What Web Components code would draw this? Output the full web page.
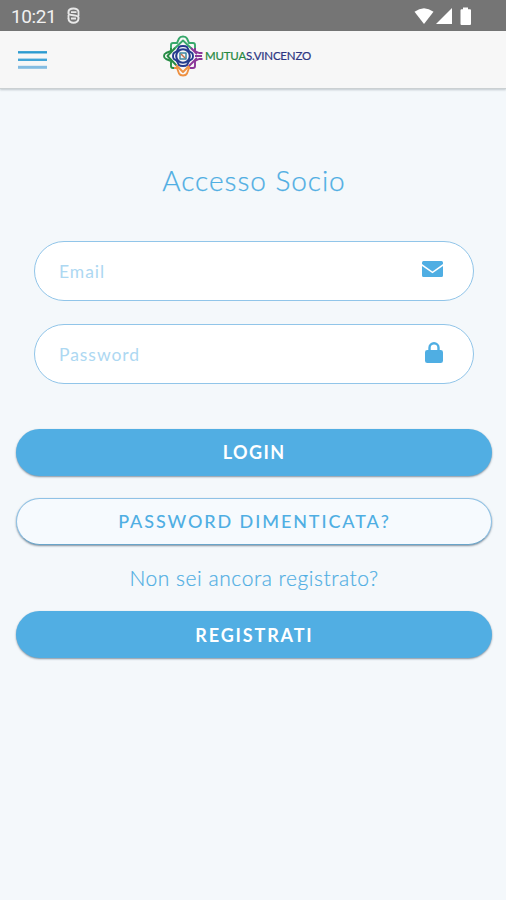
<!DOCTYPE html>
<html lang="it">
<head>
<meta charset="utf-8">
<meta name="viewport" content="width=device-width, initial-scale=1">
<title>Mutua S. Vincenzo</title>
<style>
    html, body{
        margin:0;
        height:100%;
    }
    body{
        background:#f4f8fb;
        font-family:Lato, "Open Sans", sans-serif;
        color:#4faee3;
        overflow:hidden;
    }
</style>
</head>
<body>
<login-page></login-page>

<script>
const icons={
    mail:`<svg width="21" height="16" viewBox="0 0 21 16" fill="#4faee3">
        <path d="M1.500 0H19.500Q21 0 21 1.500V3L10.500 10.500 0 3V1.500Q0 0 1.500 0Z"/>
        <path d="M0 5L10.500 12.300 21 5V14.500Q21 16 19.500 16H1.500Q0 16 0 14.500Z"/>
    </svg>`,
    lock:`<svg width="18" height="21" viewBox="0 0 18 21">
        <path d="M4.500 9V5.700A4.500 4.500 0 0 1 13.500 5.700V9" fill="none" stroke="#4faee3" stroke-width="2.400"/>
        <rect y="8" width="18" height="13" rx="2.300" fill="#4faee3"/>
    </svg>`
};

class StatusBar extends HTMLElement {
    constructor() {
        super();
        this.attachShadow({mode: 'open'});
        this.shadowRoot.innerHTML=`
            <style>
                :host{
                    display:flex;
                    align-items:center;
                    box-sizing:border-box;
                    height:31px;
                    padding:2px 34px 0 11px;
                    background:#757575;
                    color:#f1f1f1;
                    font:19px/29px Roboto, sans-serif;
                }
                .time{ width:45px; letter-spacing:-.4px; }
                .app{ margin:0 0 2px 11px; }
                .signals{ margin:0 0 1px auto; }
                svg{ display:block; }
            </style>
            <span class="time"><slot></slot></span>
            <svg class="app" width="13" height="17" viewBox="0 0 13 17" fill="none" stroke="#e8e8e8">
                <path d="M11.500 5C11.500 .2 1.500 .2 1.500 5V6.500C1.500 9 11.500 7.500 11.500 10.500V11.500C11.500 17 1.500 17 1.500 11.500" stroke-width="2"/>
                <path d="M1.500 8V12M11.500 5V9" stroke-width="1.800"/>
                <path d="M4 5.200H9.500M4 11.500H9" stroke-width="1.800"/>
            </svg>
            <svg class="signals" width="58" height="19" viewBox="0 0 58 19" fill="#fff">
                <path d="M.5 4.8Q10-2.5 19.5 4.8L10 17Z"/>
                <path d="M38 1V17H22Z"/>
                <path d="M49 .5H54V2.2H56Q57 2.2 57 3.2V16.800Q57 18 56 18H47.500Q46.500 18 46.500 17V3.200Q46.500 2.200 47.500 2.200H49Z"/>
            </svg>
        `;
    }
}

class BrandLogo extends HTMLElement {
    constructor() {
        super();
        this.attachShadow({mode: 'open'});
        this.shadowRoot.innerHTML=`
            <style>
                :host{
                    display:flex;
                    align-items:center;
                    gap:2px;
                    font-size:11.5px;
                    line-height:14px;
                    letter-spacing:-.2px;
                    color:#2c3682;
                    -webkit-text-stroke:.2px;
                    white-space:nowrap;
                }
                svg{ display:block; }
                span{ margin-top:-1px; }
                ::slotted(b){ font-weight:400; color:#25873f; }
            </style>
            <svg width="40" height="42" viewBox="0 0 40 42" fill="none" stroke-width="1.900" stroke-linejoin="round">
                <g stroke="#36a86b">
                    <path d="M8 16V10Q8 8 10 8H14L16 3.500Q17 1.500 20 1.500Q23 1.500 24 3.500L26 8H30Q32 8 32 10V15"/>
                    <path d="M11 14L20 5.500L29 14"/>
                </g>
                <g stroke="#278c45">
                    <path d="M8 13V16L3 18Q1 19 1 21Q1 23 3 24L8 26V31Q8 33 10 33H13"/>
                    <path d="M12 13L4.500 21L14 31"/>
                </g>
                <g stroke="#ee9142">
                    <path d="M11 33H14L16 38.500Q17 40.500 20 40.500Q23 40.500 24 38.500L26 33H29"/>
                    <path d="M13 30L20 37L27 30"/>
                </g>
                <g stroke="#8b3799">
                    <path d="M32 13V16L36 18H39.500M39.500 24H36L32 26V31Q32 33 30 33H27"/>
                    <path d="M28 13L34 19M34 23L26 31M32 21H39"/>
                </g>
                <g stroke="#243b8e" stroke-width="2.100">
                    <circle cx="20" cy="21" r="6.800"/>
                    <path d="M14 16L16 12Q17 11 20 11Q23 11 24 12L26 16M14 26L16 30Q17 31 20 31Q23 31 24 30L26 26M14 16L11 18Q10 19 10 21Q10 23 11 24L14 26M26 16L29 18Q30 19 30 21Q30 23 29 24L26 26" stroke-width="1.900"/>
                </g>
                <path d="M17 18H23V24H17Z" stroke="#3c88a2" stroke-width="1.500"/>
                <path d="M18 19L22 23" stroke="#bd6e4c" stroke-width="1.500"/>
            </svg>
            <span><slot></slot></span>
        `;
    }
}

class AppHeader extends HTMLElement {
    constructor() {
        super();
        this.attachShadow({mode: 'open'});
        this.shadowRoot.innerHTML=`
            <style>
                :host{
                    display:grid;
                    grid-template-columns:145px 1fr;
                    box-sizing:border-box;
                    height:58px;
                    padding:0 18px;
                    background:#f7f7f7;
                    border-bottom:1px solid #cbd0d2;
                    box-shadow:0 1px 2px rgba(70,90,100,.3);
                }
                svg{ display:block; margin-top:19px; }
                .logo{ padding-top:4px; }
            </style>
            <svg width="29" height="20" viewBox="0 0 29 20">
                <path d="M0 2.300H29" stroke="#2c9bd0" stroke-width="2.400"/>
                <path d="M0 9.800H29" stroke="#43a5d7" stroke-width="2.400"/>
                <path d="M0 17.300H29" stroke="#83bce2" stroke-width="3"/>
            </svg>
            <div class="logo"><slot></slot></div>
        `;
    }
}

class LoginField extends HTMLElement {
    constructor() {
        super();
        this.attachShadow({mode: 'open'});
        this.shadowRoot.innerHTML=`
            <style>
                :host{
                    display:flex;
                    align-items:center;
                    justify-content:space-between;
                    box-sizing:border-box;
                    height:60px;
                    padding:0 30px 0 24px;
                    border:1px solid #91c5e9;
                    border-radius:30px;
                    background:#fff;
                    font-size:17.5px;
                    color:#add8f2;
                }
                .label{ padding-top:1px; letter-spacing:.95px; }
                svg{ display:block; margin-bottom:4px; }
            </style>
            <span class="label"><slot></slot></span>
            ${icons[this.getAttribute('icon')]||''}
        `;
    }
}

class PillButton extends HTMLElement {
    constructor() {
        super();
        this.attachShadow({mode: 'open'});
        this.shadowRoot.innerHTML=`
            <style>
                :host{
                    display:flex;
                    align-items:center;
                    justify-content:center;
                    box-sizing:border-box;
                    height:47px;
                    border-radius:24px;
                    background:#51aee3;
                    color:#fff;
                    font-size:18px;
                    font-weight:700;
                    letter-spacing:var(--spacing, 1px);
                    box-shadow:0 1px 2px rgba(55,75,95,.6);
                }
                :host([outline]){
                    background:#f6fafe;
                    border:1px solid #8fc2e6;
                    border-bottom-color:#69a5ca;
                    color:#4faee3;
                    font-weight:500;
                }
                span{ margin:var(--shift, -2px) calc(var(--spacing, 1px) * -1 + 1px) 0 0; }
            </style>
            <span><slot></slot></span>
        `;
    }
}

class LoginPage extends HTMLElement {
    constructor() {
        super();
        this.attachShadow({mode: 'open'});
        this.shadowRoot.innerHTML=`
            <style>
                :host{ display:block; height:100vh; }
                main{
                    display:flex;
                    flex-direction:column;
                    padding:72px 14px 0 16px;
                }
                h1{
                    margin:0 0 42px;
                    font-size:28px;
                    line-height:38px;
                    font-weight:300;
                    letter-spacing:.95px;
                    -webkit-text-stroke:.25px;
                    text-align:center;
                }
                .fields{
                    display:grid;
                    gap:23px;
                    padding:0 18px;
                    margin-bottom:45px;
                }
                .login{ --spacing:1.4px; }
                .outline{ margin:22px 0 19px; --spacing:1.9px; }
                .register{ --spacing:1.85px; --shift:0px; }
                p{
                    margin:0 0 20px;
                    font-size:21px;
                    line-height:27px;
                    font-weight:300;
                    letter-spacing:.55px;
                    -webkit-text-stroke:.2px;
                    text-align:center;
                }
            </style>
            <status-bar>10:21</status-bar>
            <app-header><brand-logo><b>MUTUA</b>S.VINCENZO</brand-logo></app-header>
            <main>
                <h1>Accesso Socio</h1>
                <div class="fields">
                    <login-field icon="mail">Email</login-field>
                    <login-field icon="lock">Password</login-field>
                </div>
                <pill-button class="login">LOGIN</pill-button>
                <pill-button class="outline" outline>PASSWORD DIMENTICATA?</pill-button>
                <p>Non sei ancora registrato?</p>
                <pill-button class="register">REGISTRATI</pill-button>
            </main>
        `;
    }
}

customElements.define('status-bar', StatusBar);
customElements.define('brand-logo', BrandLogo);
customElements.define('app-header', AppHeader);
customElements.define('login-field', LoginField);
customElements.define('pill-button', PillButton);
customElements.define('login-page', LoginPage);
</script>
</body>
</html>
